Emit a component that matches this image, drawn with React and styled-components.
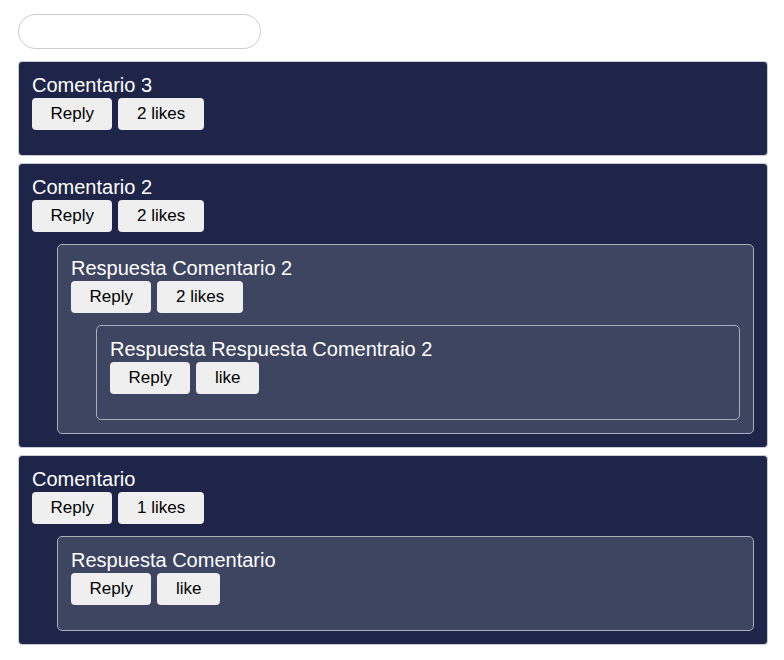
import styled, { createGlobalStyle } from 'styled-components'

const comments = [
    { id: 3, text: 'Comentario 3', likes: '2 likes', replies: [] },
    {
        id: 2,
        text: 'Comentario 2',
        likes: '2 likes',
        replies: [
            {
                id: 21,
                text: 'Respuesta Comentario 2',
                likes: '2 likes',
                replies: [
                    {
                        id: 211,
                        text: 'Respuesta Respuesta Comentraio 2',
                        likes: 'like',
                        replies: [],
                    },
                ],
            },
        ],
    },
    {
        id: 1,
        text: 'Comentario',
        likes: '1 likes',
        replies: [
            { id: 11, text: 'Respuesta Comentario', likes: 'like', replies: [] },
        ],
    },
]

const Comment = ({ comment, nested }) => {
    return (
        <Card nested={nested}>
            <Title>{comment.text}</Title>
            <Actions>
                <Button>Reply</Button>
                <Button>{comment.likes}</Button>
            </Actions>
            {comment.replies.length > 0 && (
                <Replies>
                    {comment.replies.map((reply) => (
                        <Comment key={reply.id} comment={reply} nested />
                    ))}
                </Replies>
            )}
        </Card>
    )
}

export default function App() {
    return (
        <Page>
            <GlobalStyle />
            <Search type="text" />
            <List>
                {comments.map((comment) => (
                    <Comment key={comment.id} comment={comment} />
                ))}
            </List>
        </Page>
    )
}

const GlobalStyle = createGlobalStyle`
    body {
        margin: 0;
        background: #ffffff;
        font-family: "Liberation Sans", Arial, sans-serif;
    }
`

const Page = styled.div`
    padding: 14px 16px 16px 18px;
`

const Search = styled.input`
    display: block;
    box-sizing: border-box;
    width: 243px;
    height: 35px;
    border: 1px solid #cccccc;
    border-radius: 18px;
    outline: none;
    padding: 0 14px;
    font-size: 16px;
`

const List = styled.div`
    display: flex;
    flex-direction: column;
    gap: 7px;
    margin-top: 12px;
`

const Card = styled.div`
    background-color: ${({ nested }) => (nested ? '#3d4561' : '#1e2549')};
    border: 1px solid ${({ nested }) => (nested ? '#a9adb9' : '#c9ccd6')};
    border-radius: ${({ nested }) => (nested ? '5px' : '4px')};
    padding: 12px 13px 13px;
    color: #ffffff;
`

const Title = styled.div`
    font-size: 20px;
    line-height: 23px;
    margin-bottom: 1px;
`

const Actions = styled.div`
    display: flex;
    gap: 6px;
    margin-bottom: 12px;
`

const Button = styled.button`
    height: 32px;
    padding: 0 18.5px;
    border: none;
    border-radius: 4px;
    background-color: #efefef;
    color: #000000;
    font-family: "Liberation Sans", Arial, sans-serif;
    font-size: 17px;
    cursor: pointer;
`

const Replies = styled.div`
    display: flex;
    flex-direction: column;
    gap: 8px;
    margin-left: 25px;
`
